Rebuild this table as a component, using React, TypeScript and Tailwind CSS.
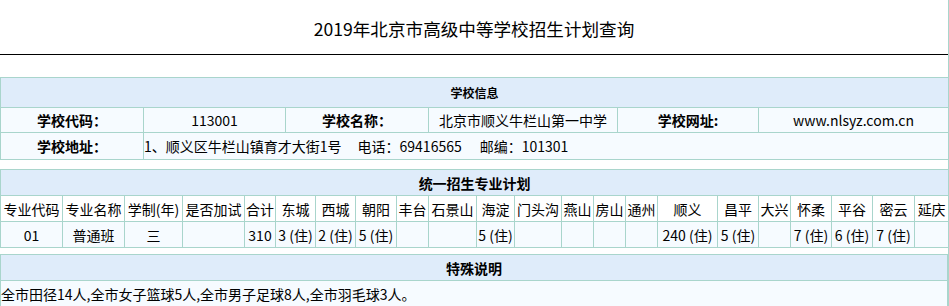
import React from "react";

const B = "border border-[#a9d5cc]";

const cols = [
  "专业代码", "专业名称", "学制(年)", "是否加试", "合计", "东城", "西城", "朝阳", "丰台", "石景山", "海淀",
  "门头沟", "燕山", "房山", "通州", "顺义", "昌平", "大兴", "怀柔", "平谷", "密云", "延庆",
];
const widths = [62, 62, 58, 62, 31, 40, 40, 41, 32, 48, 38, 47, 32, 32, 32, 60, 41, 32, 41, 41, 42, 34];
const data = [
  "01", "普通班", "三", "", "310", "3 (住)", "2 (住)", "5 (住)", "", "", "5 (住)",
  "", "", "", "", "240 (住)", "5 (住)", "", "7 (住)", "6 (住)", "7 (住)", "",
];

export default function App() {
  return (
    <div className="w-[949px] min-h-[306px] border-r border-[#a9d5cc] bg-white text-black font-['Noto_Sans_CJK_SC','Microsoft_YaHei',sans-serif]">
      <div className="w-[948px] h-[54px] flex items-center justify-center text-[17.6px] leading-none pt-[3px]">
        2019年北京市高级中等学校招生计划查询
      </div>
      <div className="w-[948px] h-px bg-black" />

      <table className="mt-[22px] w-[948px] table-fixed border-collapse text-[14px] leading-none">
        <colgroup>
          <col className="w-[143px]" />
          <col className="w-[142px]" />
          <col className="w-[143px]" />
          <col className="w-[189px]" />
          <col className="w-[141px]" />
          <col className="w-[190px]" />
        </colgroup>
        <tbody>
          <tr className="bg-[#dfecfa]">
            <th colSpan={6} className={`${B} h-[30px] p-0 text-[12px] font-bold text-center`}>学校信息</th>
          </tr>
          <tr className="bg-[#f6fbff]">
            <td className={`${B} h-[25px] p-0 text-center font-bold`}>学校代码：</td>
            <td className={`${B} p-0 text-center`}>113001</td>
            <td className={`${B} p-0 text-center font-bold`}>学校名称：</td>
            <td className={`${B} p-0 text-center`}>北京市顺义牛栏山第一中学</td>
            <td className={`${B} p-0 text-center font-bold`}>学校网址:</td>
            <td className={`${B} p-0 text-center`}>www.nlsyz.com.cn</td>
          </tr>
          <tr className="bg-[#f6fbff]">
            <td className={`${B} h-[27px] p-0 text-center font-bold`}>学校地址：</td>
            <td colSpan={5} className={`${B} p-0 text-left`}>
              1、顺义区牛栏山镇育才大街1号<span className="ml-[16px]">电话：69416565</span>
              <span className="ml-[18px]">邮编：101301</span>
            </td>
          </tr>
        </tbody>
      </table>

      <table className="mt-[9px] w-[948px] table-fixed border-collapse text-[14px] leading-none">
        <colgroup>
          {widths.map((w, i) => (
            <col key={i} style={{ width: `${w}px` }} />
          ))}
        </colgroup>
        <tbody>
          <tr className="bg-[#dfecfa]">
            <th colSpan={22} className={`${B} h-[26px] p-0 font-bold text-center`}>统一招生专业计划</th>
          </tr>
          <tr className="bg-white">
            {cols.map((c, i) => (
              <td key={i} className={`${B} h-[26px] p-0 text-center whitespace-nowrap`}>{c}</td>
            ))}
          </tr>
          <tr className="bg-[#f6fbff]">
            {data.map((c, i) => (
              <td key={i} className={`${B} h-[26px] p-0 text-center whitespace-nowrap`}>{c}</td>
            ))}
          </tr>
        </tbody>
      </table>

      <table className="mt-[6px] w-[948px] table-fixed border-collapse text-[14px] leading-none">
        <tbody>
          <tr className="bg-[#dfecfa]">
            <th className={`${B} h-[26px] p-0 font-bold text-center`}>特殊说明</th>
          </tr>
          <tr className="bg-[#f6fbff]">
            <td className={`${B} h-[26px] p-0 text-left`}>全市田径14人,全市女子篮球5人,全市男子足球8人,全市羽毛球3人。</td>
          </tr>
        </tbody>
      </table>
    </div>
  );
}
